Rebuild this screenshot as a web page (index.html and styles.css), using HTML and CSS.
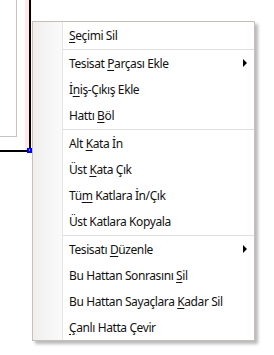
FILE: index.html
```html
<!DOCTYPE html>
<html lang="tr">
<head>
    <meta charset="UTF-8">
    <title>Bağlam Menüsü</title>
    <link rel="stylesheet" href="styles.css">
</head>
<body>
    <!-- çizim alanı -->
    <div class="canvas">
        <div class="panel"></div>
        <div class="pink-band"></div>
        <div class="pipe-v"></div>
        <div class="pipe-h"></div>
        <div class="grip"></div>
    </div>

    <!-- sağ tık menüsü -->
    <ul class="menu">
        <li class="item"><span><u>S</u>eçimi Sil</span></li>
        <li class="sep"></li>
        <li class="item"><span>Tesisat <u>P</u>arçası Ekle</span><i class="arrow"></i></li>
        <li class="item"><span>İ<u>n</u>iş-Çıkış Ekle</span></li>
        <li class="item"><span>Hattı <u>B</u>öl</span></li>
        <li class="sep"></li>
        <li class="item"><span>Alt <u>K</u>ata İn</span></li>
        <li class="item"><span>Üst <u>K</u>ata Çık</span></li>
        <li class="item"><span>Tü<u>m</u> Katlara İn/Çık</span></li>
        <li class="item"><span>Üst Katlara Kopyala</span></li>
        <li class="sep"></li>
        <li class="item"><span>Tesisatı <u>D</u>üzenle</span><i class="arrow"></i></li>
        <li class="item"><span>Bu Hattan Sonrasını <u>S</u>il</span></li>
        <li class="item"><span>Bu Hattan Sayaçlara <u>K</u>adar Sil</span></li>
        <li class="item"><span><u>Ç</u>anlı Hatta Çevir</span></li>
    </ul>
</body>
</html>
```

FILE: styles.css
```css
body {
    margin: 0;
    background: #fff;
    font-family: "Noto Sans", sans-serif;
    width: 274px;
    height: 355px;
    position: relative;
    overflow: hidden;
}

/* arka plandaki çizim */
.canvas {
    position: absolute;
    left: 0;
    top: 0;
    width: 274px;
    height: 355px;
}
.panel {
    position: absolute;
    left: 0;
    top: 0;
    width: 16px;
    height: 136px;
    border-right: 1px solid #c4c4c4;
    border-bottom: 1px solid #c4c4c4;
}
.pink-band {
    position: absolute;
    left: 25px;
    top: 0;
    width: 4px;
    height: 150px;
    background: #fdeaea;
}
.pipe-v {
    position: absolute;
    left: 29px;
    top: 0;
    width: 2px;
    height: 151px;
    background: #120000;
}
.pipe-h {
    position: absolute;
    left: 0;
    top: 150px;
    width: 28px;
    height: 2px;
    background: #000;
}
.grip {
    position: absolute;
    left: 27px;
    top: 148px;
    width: 5px;
    height: 5px;
    background: #0000ff;
}
.grip::after {
    content: "";
    position: absolute;
    left: 2px;
    top: 1px;
    width: 1px;
    height: 2px;
    background: #9aa0ff;
}

/* menü */
.menu {
    position: absolute;
    left: 32px;
    top: 21px;
    width: 221px;
    margin: 0;
    padding: 0;
    list-style: none;
    border: 1px solid #c9beb7;
    background: linear-gradient(to right, #efefef 0, #fafafa 29px, #e4e4e4 29px, #e4e4e4 30px, #fff 30px);
    box-shadow: 3px 3px 3px rgba(0, 0, 0, 0.28);
}
.item {
    display: flex;
    align-items: center;
    height: 26px;
    padding-left: 36px;
    padding-right: 7px;
    font-size: 12px;
    letter-spacing: -0.4px;
    color: #111;
}
.item u {
    text-decoration: underline;
    text-underline-offset: 2px;
}
.sep {
    height: 1px;
    margin: 1px 0 0 30px;
    background: #e0e0e0;
}
.arrow {
    margin-left: auto;
    width: 0;
    height: 0;
    border-left: 4px solid #000;
    border-top: 4px solid transparent;
    border-bottom: 4px solid transparent;
}
```
